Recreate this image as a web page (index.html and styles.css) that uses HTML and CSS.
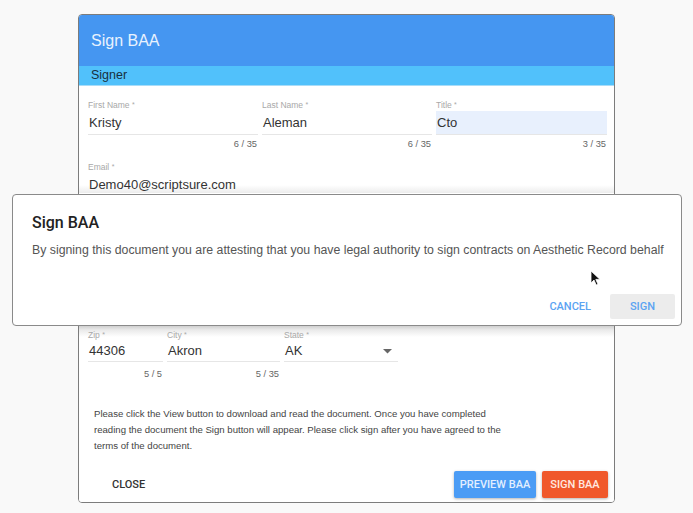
FILE: index.html
```html
<!DOCTYPE html>
<html>
<head>
<meta charset="utf-8">
<link rel="stylesheet" href="styles.css">
</head>
<body>
<div class="card">
  <div class="card-head">Sign BAA</div>
  <div class="section-bar">Signer</div>
  <div class="top-fields">
    <div class="row3">
      <div class="field">
        <div class="lbl">First Name <span class="req">*</span></div>
        <div class="val">Kristy</div>
        <div class="count">6 / 35</div>
      </div>
      <div class="field">
        <div class="lbl">Last Name <span class="req">*</span></div>
        <div class="val">Aleman</div>
        <div class="count">6 / 35</div>
      </div>
      <div class="field">
        <div class="lbl">Title <span class="req">*</span></div>
        <div class="val val-auto">Cto</div>
        <div class="count">3 / 35</div>
      </div>
    </div>
    <div class="field email">
      <div class="lbl">Email <span class="req">*</span></div>
      <div class="val val-plain">Demo40@scriptsure.com</div>
    </div>
  </div>
  <div class="hidden-part"></div>
  <div class="bottom">
    <div class="addr">
      <div class="field f-zip">
        <div class="lbl">Zip <span class="req">*</span></div>
        <div class="val">44306</div>
        <div class="count">5 / 5</div>
      </div>
      <div class="field f-city">
        <div class="lbl">City <span class="req">*</span></div>
        <div class="val">Akron</div>
        <div class="count">5 / 35</div>
      </div>
      <div class="field f-state">
        <div class="lbl">State <span class="req">*</span></div>
        <div class="val val-select">AK
          <svg class="caret" width="9" height="5" viewBox="0 0 9 5"><path d="M0 0h9L4.5 4.5z" fill="#666"/></svg>
        </div>
      </div>
    </div>
    <p class="instr">Please click the View button to download and read the document. Once you have completed reading the document the Sign button will appear. Please click sign after you have agreed to the terms of the document.</p>
    <div class="actions">
      <span class="btn-close">CLOSE</span>
      <div class="right-btns">
        <span class="btn btn-preview">PREVIEW BAA</span>
        <span class="btn btn-sign">SIGN BAA</span>
      </div>
    </div>
  </div>
</div>

<div class="dialog">
  <div class="dlg-title">Sign BAA</div>
  <div class="dlg-body">By signing this document you are attesting that you have legal authority to sign contracts on Aesthetic Record behalf</div>
  <div class="dlg-actions">
    <span class="dlg-cancel">CANCEL</span>
    <span class="dlg-sign">SIGN</span>
  </div>
</div>

<svg class="cursor" width="11" height="16" viewBox="0 0 11 16"><path d="M1 1v12l3-3 2.2 5 1.8-.8-2.2-4.8H10z" fill="#111" stroke="#fff" stroke-width="0.8"/></svg>
</body>
</html>
```
FILE: styles.css
```css
html, body {
  margin: 0;
  padding: 0;
}
body {
  background: #f9f9f9;
  font-family: "Liberation Sans", Arial, sans-serif;
  width: 693px;
  height: 513px;
  overflow: hidden;
  position: relative;
}
.card {
  margin: 14px 0 0 78px;
  width: 535px;
  border: 1px solid #7c7c7c;
  border-radius: 4px;
  background: #fff;
  overflow: hidden;
  display: flex;
  flex-direction: column;
}
.card-head {
  height: 51px;
  line-height: 51px;
  background: #4596f1;
  color: #e9f2fe;
  font-size: 16px;
  padding-left: 12px;
}
.section-bar {
  height: 19px;
  line-height: 19px;
  background: #51c1fb;
  color: #183040;
  font-size: 12.5px;
  padding-left: 12px;
  border-bottom: 1px solid #a8dcf8;
}
.top-fields {
  height: 107px;
  overflow: hidden;
  padding: 0 8px 0 9px;
  background: linear-gradient(to bottom, #fff 0, #fff 99px, #ececec 107px);
}
.row3 {
  display: grid;
  grid-template-columns: 170px 170px 171px;
  column-gap: 4px;
  padding-top: 13px;
}
.field {
  display: flex;
  flex-direction: column;
}
.lbl {
  font-size: 8.5px;
  line-height: 12px;
  color: #a8a8a8;
}
.req {
  font-size: 7px;
  vertical-align: top;
}
.val {
  height: 23px;
  line-height: 23px;
  font-size: 13px;
  color: #333;
  border-bottom: 1px solid #e6e6e6;
  padding-left: 1px;
}
.val-auto {
  background: #e8f0fd;
}
.val-plain {
  border-bottom: none;
}
.count {
  margin-top: 3px;
  font-size: 9.3px;
  line-height: 12px;
  color: #666;
  text-align: right;
  padding-right: 1px;
}
.email {
  margin-top: 11px;
}
.hidden-part {
  height: 132px;
}
.bottom {
  background: linear-gradient(to bottom, #c9c9c9 0, #eaeaea 5px, #fff 12px);
  padding: 4px 9px 4px 9px;
}
.addr {
  display: grid;
  grid-template-columns: 75px 113px 114px;
  column-gap: 4px;
}
.f-zip .val, .f-city .val {
  height: 20px;
  line-height: 20px;
}
.f-zip .count, .f-city .count {
  margin-top: 6px;
}
.val-select {
  height: 20px;
  line-height: 20px;
  display: flex;
  justify-content: space-between;
  align-items: center;
  padding-right: 6px;
}
.caret {
  display: block;
}
.instr {
  margin: 26px 0 0 6px;
  width: 412px;
  font-size: 9.6px;
  line-height: 16px;
  color: #444;
}
.actions {
  display: flex;
  justify-content: space-between;
  align-items: center;
  margin-top: 17px;
}
.btn-close {
  margin-left: 24px;
  font-family: Roboto, "Liberation Sans", sans-serif;
  font-weight: 500;
  font-size: 11px;
  color: #333;
}
.right-btns {
  display: flex;
  gap: 6px;
  margin-right: -3px;
}
.btn {
  height: 27px;
  line-height: 27px;
  font-family: Roboto, "Liberation Sans", sans-serif;
  font-weight: 500;
  font-size: 11px;
  border-radius: 2px;
  box-shadow: 0 1px 3px rgba(0,0,0,0.3);
  text-align: center;
}
.btn-preview {
  width: 82px;
  background: #4b9cf5;
  color: #e3efff;
}
.btn-sign {
  width: 66px;
  background: #f0582b;
  color: #ffe9e0;
}
.dialog {
  position: absolute;
  left: 12px;
  top: 194px;
  width: 668px;
  height: 130px;
  border: 1px solid #8a8a8a;
  border-radius: 4px;
  background: #fff;
  display: flex;
  flex-direction: column;
}
.dlg-title {
  margin: 18px 0 0 19px;
  font-family: Roboto, "Liberation Sans", sans-serif;
  font-weight: 500;
  font-size: 16px;
  line-height: 20px;
  color: #222;
}
.dlg-body {
  margin: 9px 0 0 19px;
  font-size: 12.3px;
  line-height: 16px;
  color: #555;
}
.dlg-actions {
  margin-top: auto;
  display: flex;
  justify-content: flex-end;
  align-items: center;
  padding: 0 6px 6px 0;
  gap: 19px;
}
.dlg-cancel, .dlg-sign {
  font-family: Roboto, "Liberation Sans", sans-serif;
  font-weight: 500;
  font-size: 11px;
  color: #5ba3f2;
}
.dlg-sign {
  width: 65px;
  height: 25px;
  line-height: 25px;
  text-align: center;
  background: #ececec;
  border-radius: 2px;
}
.cursor {
  position: absolute;
  left: 590px;
  top: 270px;
}
```
